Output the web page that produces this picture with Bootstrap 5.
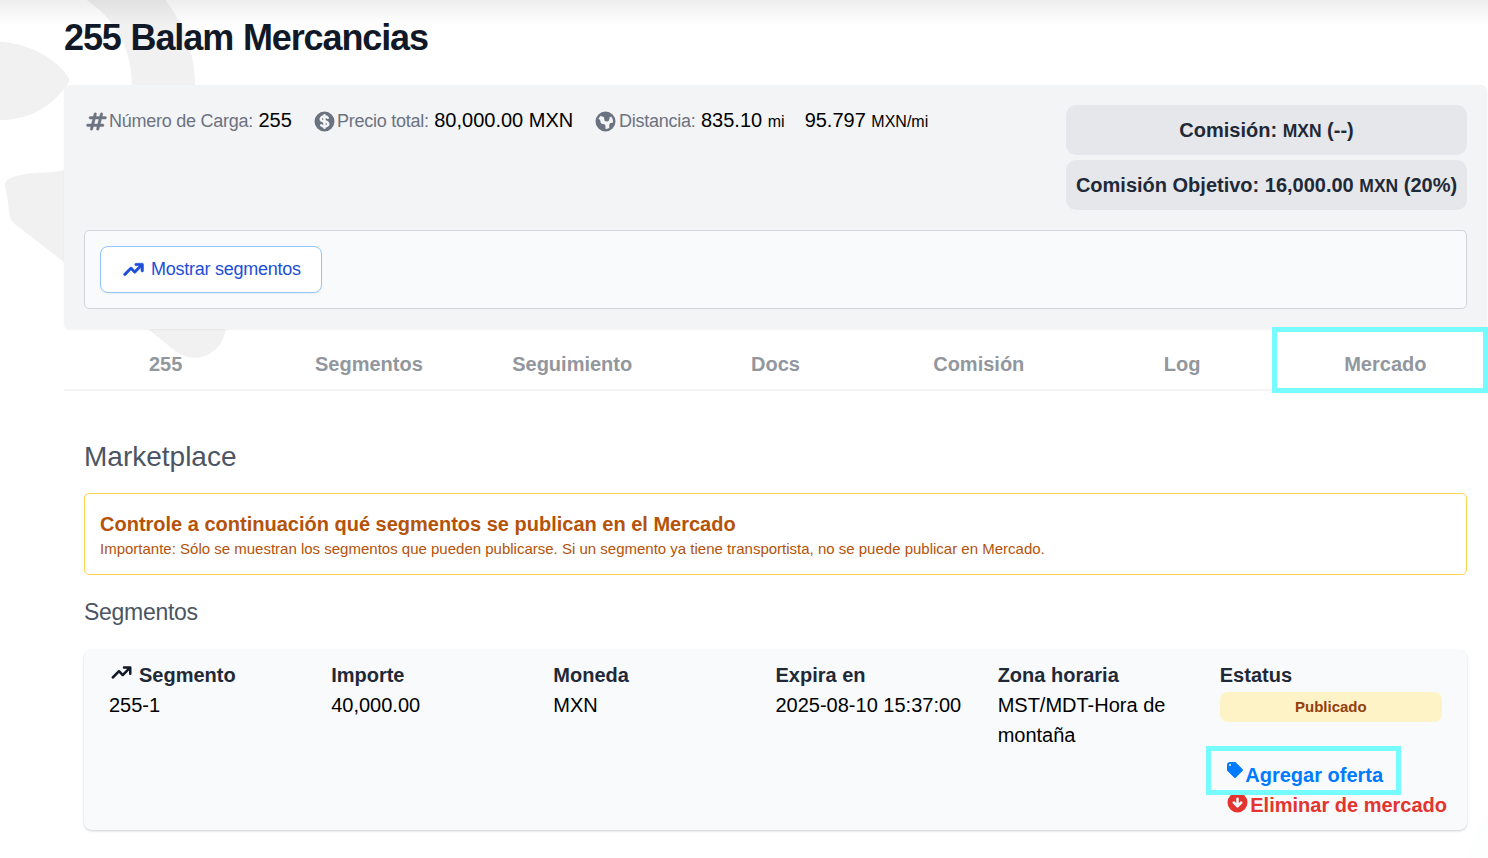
<!DOCTYPE html>
<html lang="es">
<head>
<meta charset="utf-8">
<title>255 Balam Mercancias</title>
<meta name="viewport" content="width=device-width, initial-scale=1">
<link rel="stylesheet" href="https://cdn.jsdelivr.net/npm/bootstrap@5.3.0/dist/css/bootstrap.min.css">
<style>
body{font-family:"Liberation Sans",Arial,sans-serif;font-size:20px;line-height:30px;color:#000;background:#fff;height:858px;overflow:hidden}
.backdrop{position:absolute;left:0;top:0;z-index:-2}
.top-fade{position:absolute;left:0;top:0;width:100%;height:26px;background:linear-gradient(rgba(0,0,0,.065),rgba(0,0,0,0));z-index:-1}
.page{margin-left:64px;width:1423px}
.page-title{font-size:36px;line-height:45px;letter-spacing:-1.12px;word-spacing:1px;font-weight:700;color:#111827;padding-top:15px;height:85px;margin:0}
.load-panel{background:#f3f4f6;border-radius:6px;height:244px;padding:20px;box-shadow:0 1px 2px rgba(0,0,0,.05)}
.facts{height:125px}
.fact-number{width:228px}
.fact-price{width:281px}
.facts .ico{color:#6b7280;margin-top:4px}
.fact-distance .ico{margin-right:1px}
.fact-label{font-size:18px;letter-spacing:-.26px;color:#6b7280}
.unit{font-size:16px}
.rate{margin-left:20px}
.ico{display:block;flex:none;fill:currentColor}
.commission{width:401px;height:50px;line-height:50px;border-radius:10px;background:#e5e7eb;color:#1f2937;font-weight:700;text-align:center;white-space:nowrap}
.commission .cur{font-size:17.5px}
.route-box{height:79px;border:1px solid #d1d5db;border-radius:5px;background:#f9fafb;padding:15px}
.btn-route{--bs-btn-bg:#fff;--bs-btn-color:#1d4ed8;--bs-btn-border-color:#93c5fd;--bs-btn-border-radius:8px;width:222px;height:47px;font-size:18px;letter-spacing:-.26px;padding:0 0 0 20px;box-shadow:0 1px 2px rgba(0,0,0,.05)}
.btn-route .ico{margin-right:5px}
.load-tabs{height:62px;border-bottom:2px solid #f3f4f6}
.load-tabs .nav-link{padding:20px 0 10px;color:#92979e;font-weight:700;line-height:30px}
.market{padding:47px 20px 0}
.market h2{font-size:28px;line-height:38px;color:#4b5563;font-weight:400;margin:0 0 17px}
.notice{height:82px;border:1px solid #fcd34d;border-radius:5px;padding:15px;color:#b45309}
.notice strong{display:block;line-height:30px}
.notice p{font-size:15px;line-height:20px;margin:0}
.market h3{font-size:23px;letter-spacing:-.28px;line-height:30px;color:#4b5563;font-weight:400;margin:22px 0 23px}
.segment-card{height:180px;background:#f9fafb;border-radius:8px;padding:10px 25px;box-shadow:0 1px 3px rgba(0,0,0,.1),0 1px 2px rgba(0,0,0,.1)}
.head{font-weight:700;color:#1f2937}
.head .ico{margin-right:5px;color:#111827}
.status{height:30px;margin-top:2px;border-radius:8px;background:#fef3c7;color:#92400e;font-size:15px;font-weight:700;text-align:center}
.actions{margin:38px -10px 0 5px;font-weight:700;white-space:nowrap}
.actions a{display:flex;height:30px;text-decoration:none}
.actions .ico{margin-right:.5px}
.offer{color:#007bff}
.remove{color:#e3342f}
.marker{position:absolute;border:5px solid #76fcff;pointer-events:none}
.marker-tab{left:1272px;top:327px;width:216px;height:66px}
.marker-offer{left:1206px;top:746px;width:195px;height:49px}
</style>
</head>
<body>
<svg class="backdrop" width="1488" height="858" fill="#f1f1f1" aria-hidden="true">
<path d="M0 42C30 43 58 60 69 78Q70 83 64 89C46 111 25 120 0 120Z"/>
<path d="M80 -4C112 14 132 45 132 86H195C195 50 183 22 161 -6Z"/>
<path d="M64 170C50 174 28 171 13 177Q4 180 5 186L8 201C9 211 8 219 16 225L64 262L173 349C198 370 226 350 226 325V170Z"/>
<path d="M1488 815Q1472 832 1468 858H1488Z" fill="#fdfefe"/>
</svg>
<div class="top-fade"></div>
<main class="page">
<h1 class="page-title">255 Balam Mercancias</h1>
<section class="load-panel">
<div class="facts d-flex justify-content-between">
<div class="d-flex text-nowrap">
<div class="d-flex fact-number">
<svg class="ico" width="25" height="25" viewBox="0 0 20 20"><path fill-rule="evenodd" stroke="currentColor" stroke-width=".35" d="M9.243 3.03a1 1 0 0 1 .727 1.213L9.53 6h2.94l.56-2.243a1 1 0 1 1 1.94.486L14.53 6H17a1 1 0 1 1 0 2h-2.97l-1 4H15a1 1 0 1 1 0 2h-2.47l-.56 2.242a1 1 0 1 1-1.94-.485L10.47 14H7.53l-.56 2.242a1 1 0 1 1-1.94-.485L5.47 14H3a1 1 0 1 1 0-2h2.97l1-4H5a1 1 0 1 1 0-2h2.47l.56-2.243a1 1 0 0 1 1.213-.727zM9.03 8l-1 4h2.938l1-4H9.031z"/></svg>
<span><span class="fact-label">Número de Carga:</span> 255</span></div>
<div class="d-flex fact-price">
<svg class="ico" width="25" height="25" viewBox="0 0 20 20"><path d="M8.433 7.418c.155-.103.346-.196.567-.267v1.698a2.305 2.305 0 0 1-.567-.267C8.07 8.34 8 8.114 8 8c0-.114.07-.34.433-.582zM11 12.849v-1.698c.22.071.412.164.567.267.364.243.433.468.433.582 0 .114-.07.34-.433.582a2.305 2.305 0 0 1-.567.267z"/><path fill-rule="evenodd" d="M10 18a8 8 0 1 0 0-16 8 8 0 0 0 0 16zm1-13a1 1 0 1 0-2 0v.092a4.535 4.535 0 0 0-1.676.662C6.602 6.234 6 7.009 6 8c0 .99.602 1.765 1.324 2.246.48.32 1.054.545 1.676.662v1.941c-.391-.127-.68-.317-.843-.504a1 1 0 1 0-1.51 1.31c.562.649 1.413 1.076 2.353 1.253V15a1 1 0 1 0 2 0v-.092a4.535 4.535 0 0 0 1.676-.662C13.398 13.766 14 12.991 14 12c0-.99-.602-1.765-1.324-2.246A4.535 4.535 0 0 0 11 9.092V7.151c.391.127.68.317.843.504a1 1 0 1 0 1.511-1.31c-.563-.649-1.413-1.076-2.354-1.253V5z"/></svg>
<span><span class="fact-label">Precio total:</span> 80,000.00 MXN</span></div>
<div class="d-flex fact-distance">
<svg class="ico" width="25" height="25" viewBox="0 0 20 20"><path fill-rule="evenodd" d="M10 18a8 8 0 1 0 0-16 8 8 0 0 0 0 16zM4.332 8.027a6.012 6.012 0 0 1 1.912-2.706C6.512 5.73 6.974 6 7.5 6A1.5 1.5 0 0 1 9 7.5V8a2 2 0 0 0 4 0 2 2 0 0 1 1.523-1.943A5.977 5.977 0 0 1 16 10c0 .34-.028.675-.083 1H15a2 2 0 0 0-2 2v2.197A5.973 5.973 0 0 1 10 16v-2a2 2 0 0 0-2-2 2 2 0 0 1-2-2 2 2 0 0 0-1.668-1.973z"/></svg>
<span><span class="fact-label">Distancia:</span> 835.10 <span class="unit">mi</span></span></div>
<span class="rate">95.797 <span class="unit">MXN/mi</span></span>
</div>
<div class="d-flex flex-column" style="gap:5px">
<div class="commission">Comisión: <span class="cur">MXN</span> (--)</div>
<div class="commission">Comisión Objetivo: 16,000.00 <span class="cur">MXN</span> (20%)</div>
</div>
</div>
<div class="route-box">
<button class="btn btn-route d-flex align-items-center" type="button">
<svg class="ico" width="25" height="25" viewBox="0 0 20 20"><path fill-rule="evenodd" stroke="currentColor" stroke-width=".4" d="M12 7a1 1 0 1 1 0-2h5a1 1 0 0 1 1 1v5a1 1 0 1 1-2 0V8.414l-4.293 4.293a1 1 0 0 1-1.414 0L8 10.414l-4.293 4.293a1 1 0 0 1-1.414-1.414l5-5a1 1 0 0 1 1.414 0L11 10.586 14.586 7H12z"/></svg>
Mostrar segmentos</button>
</div>
</section>
<nav class="nav nav-justified load-tabs">
<a class="nav-link" href="#">255</a><a class="nav-link" href="#">Segmentos</a><a class="nav-link" href="#">Seguimiento</a><a class="nav-link" href="#">Docs</a><a class="nav-link" href="#">Comisión</a><a class="nav-link" href="#">Log</a><a class="nav-link" href="#">Mercado</a>
</nav>
<section class="market">
<h2>Marketplace</h2>
<div class="notice"><strong>Controle a continuación qué segmentos se publican en el Mercado</strong>
<p>Importante: Sólo se muestran los segmentos que pueden publicarse. Si un segmento ya tiene transportista, no se puede publicar en Mercado.</p></div>
<h3>Segmentos</h3>
<div class="segment-card">
<div class="row g-0">
<div class="col-2"><div class="head d-flex"><svg class="ico" width="25" height="25" viewBox="0 0 20 20"><path fill-rule="evenodd" d="M12 7a1 1 0 1 1 0-2h5a1 1 0 0 1 1 1v5a1 1 0 1 1-2 0V8.414l-4.293 4.293a1 1 0 0 1-1.414 0L8 10.414l-4.293 4.293a1 1 0 0 1-1.414-1.414l5-5a1 1 0 0 1 1.414 0L11 10.586 14.586 7H12z"/></svg>Segmento</div>255-1</div>
<div class="col-2"><div class="head">Importe</div>40,000.00</div>
<div class="col-2"><div class="head">Moneda</div>MXN</div>
<div class="col-2"><div class="head">Expira en</div>2025-08-10 15:37:00</div>
<div class="col-2"><div class="head">Zona horaria</div>MST/MDT-Hora de montaña</div>
<div class="col-2"><div class="head">Estatus</div><div class="status">Publicado</div>
<div class="actions">
<a href="#" class="offer"><svg class="ico" width="20" height="20" viewBox="0 0 20 20"><path fill-rule="evenodd" d="M17.707 9.293a1 1 0 0 1 0 1.414l-7 7a1 1 0 0 1-1.414 0l-7-7A.997.997 0 0 1 2 10V5a3 3 0 0 1 3-3h5c.256 0 .512.098.707.293l7 7zM5 6a1 1 0 1 0 0-2 1 1 0 0 0 0 2z"/></svg>Agregar oferta</a>
<a href="#" class="remove"><svg class="ico" width="25" height="25" viewBox="0 0 20 20"><path fill-rule="evenodd" d="M10 18a8 8 0 1 0 0-16 8 8 0 0 0 0 16zm1-11a1 1 0 1 0-2 0v3.586L7.707 9.293a1 1 0 0 0-1.414 1.414l3 3a1 1 0 0 0 1.414 0l3-3a1 1 0 0 0-1.414-1.414L11 10.586V7z"/></svg>Eliminar de mercado</a>
</div></div>
</div>
</div>
</section>
</main>
<div class="marker marker-tab"></div>
<div class="marker marker-offer"></div>
<script src="https://cdn.jsdelivr.net/npm/bootstrap@5.3.0/dist/js/bootstrap.bundle.min.js"></script>
</body>
</html>
